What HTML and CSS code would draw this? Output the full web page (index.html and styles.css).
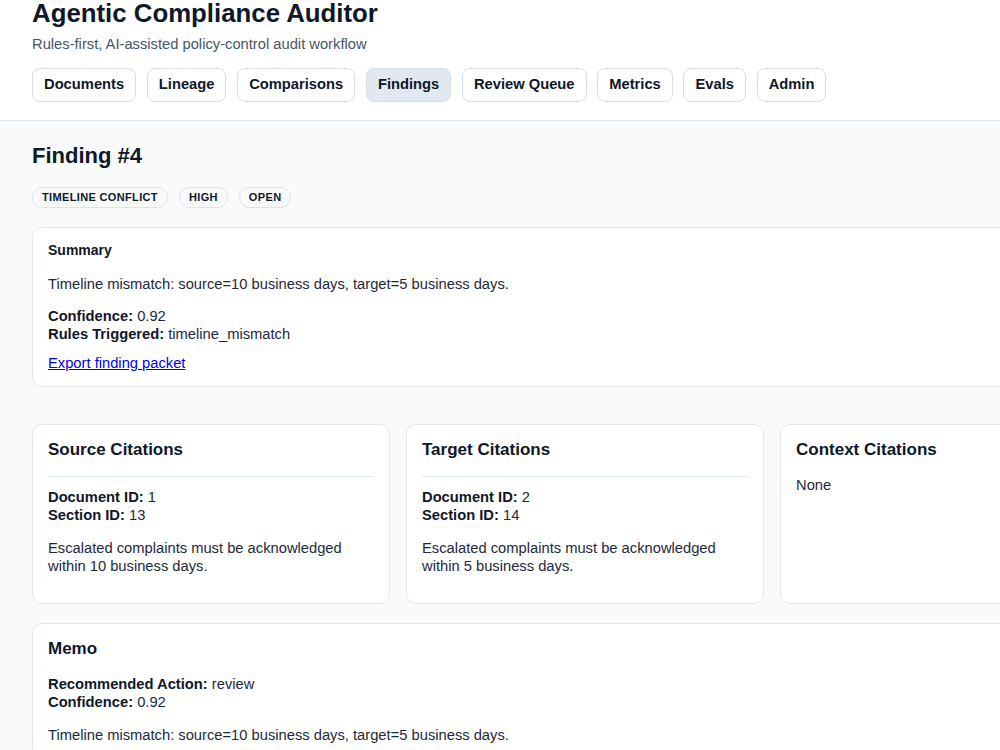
FILE: index.html
```html
<!DOCTYPE html>
<html lang="en">
<head>
<meta charset="utf-8">
<title>Agentic Compliance Auditor</title>
<link rel="stylesheet" href="styles.css">
</head>
<body>
<header class="topbar">
  <h1 class="app-title">Agentic Compliance Auditor</h1>
  <p class="subtitle">Rules-first, AI-assisted policy-control audit workflow</p>
  <nav class="nav">
    <a class="nav-btn">Documents</a>
    <a class="nav-btn">Lineage</a>
    <a class="nav-btn">Comparisons</a>
    <a class="nav-btn active">Findings</a>
    <a class="nav-btn">Review Queue</a>
    <a class="nav-btn">Metrics</a>
    <a class="nav-btn">Evals</a>
    <a class="nav-btn">Admin</a>
  </nav>
</header>
<main class="main">
  <div class="content">
    <h2 class="page-title">Finding #4</h2>
    <div class="tags">
      <span class="tag">Timeline Conflict</span>
      <span class="tag">High</span>
      <span class="tag">Open</span>
    </div>
    <section class="card summary">
      <h4 class="card-label">Summary</h4>
      <p class="para lead">Timeline mismatch: source=10 business days, target=5 business days.</p>
      <p class="para meta"><b>Confidence:</b> 0.92<br><b>Rules Triggered:</b> timeline_mismatch</p>
      <div class="actions"><a class="link" href="#">Export finding packet</a></div>
    </section>
    <div class="grid">
      <section class="card cite">
        <h3 class="card-title">Source Citations</h3>
        <hr class="rule">
        <p class="para first"><b>Document ID:</b> 1<br><b>Section ID:</b> 13</p>
        <p class="para">Escalated complaints must be acknowledged within 10 business days.</p>
      </section>
      <section class="card cite">
        <h3 class="card-title">Target Citations</h3>
        <hr class="rule">
        <p class="para first"><b>Document ID:</b> 2<br><b>Section ID:</b> 14</p>
        <p class="para">Escalated complaints must be acknowledged within 5 business days.</p>
      </section>
      <section class="card cite">
        <h3 class="card-title">Context Citations</h3>
        <p class="para first">None</p>
      </section>
    </div>
    <section class="card memo">
      <h3 class="card-title">Memo</h3>
      <p class="para first"><b>Recommended Action:</b> review<br><b>Confidence:</b> 0.92</p>
      <p class="para">Timeline mismatch: source=10 business days, target=5 business days.</p>
    </section>
  </div>
</main>
</body>
</html>
```
FILE: styles.css
```css
* { box-sizing: border-box; }
html { font-size: 16px; }
html, body { margin: 0; padding: 0; }
body {
  font-family: "Liberation Sans", Arial, sans-serif;
  font-size: 14.72px;
  line-height: 1.2;
  color: #1e293b;
  background: #f8fafc;
  width: 1170px;
}
.topbar {
  background: #ffffff;
  padding: 0 32px 18px;
  border-bottom: 1px solid #e2e8f0;
}
.app-title {
  margin: 0;
  font-size: 25.8px;
  line-height: 26px;
  font-weight: 700;
  color: #0f172a;
}
.subtitle {
  margin: 9px 0 0;
  font-size: 14.72px;
  line-height: 18px;
  color: #475569;
}
.nav {
  display: flex;
  gap: 10.7px;
  margin-top: 15px;
}
.nav-btn {
  display: inline-flex;
  align-items: center;
  height: 34px;
  padding: 0 11px;
  border: 1px solid #d6dee8;
  border-radius: 8px;
  background: #ffffff;
  font-size: 14.72px;
  font-weight: 700;
  color: #0f172a;
}
.nav-btn.active { background: #e2e8f0; }
.main { padding: 22px 32px 40px; }
.content { width: 1106px; }
.page-title {
  margin: 0;
  font-size: 22px;
  line-height: 26px;
  font-weight: 700;
  color: #0f172a;
}
.tags {
  display: flex;
  gap: 11px;
  margin-top: 18px;
}
.tag {
  display: inline-flex;
  align-items: center;
  height: 21px;
  padding: 0 9px;
  border: 1px solid #dbe3ee;
  border-radius: 999px;
  background: #f8fafc;
  font-size: 11px;
  font-weight: 700;
  letter-spacing: 0.35px;
  text-transform: uppercase;
  color: #0f172a;
}
.card {
  background: #ffffff;
  border: 1px solid #e2e8f0;
  border-radius: 10px;
  padding: 14px 15px;
}
.summary { margin-top: 19px; }
.card-label {
  margin: 0;
  font-size: 14px;
  line-height: 1.2;
  font-weight: 700;
  color: #0f172a;
}
.para {
  margin: 14.72px 0 0;
  line-height: 18px;
  color: #1e293b;
}
.para.lead { margin-top: 16px; }
.para.meta { margin-top: 14px; }
.para b { color: #0f172a; }
.actions { margin-top: 11px; line-height: 18px; }
.link {
  color: #0000ee;
  text-decoration: underline;
}
.grid {
  display: grid;
  grid-template-columns: repeat(3, 1fr);
  gap: 16px;
  margin-top: 37px;
}
.cite { min-height: 180px; padding-top: 15px; }
.card-title {
  margin: 0;
  font-size: 17px;
  line-height: 1.2;
  font-weight: 700;
  color: #0f172a;
}
.rule {
  border: 0;
  border-top: 1px solid #e2e8f0;
  margin: 16px 0 0;
}
.para.first { margin-top: 16px; }
.rule + .para.first { margin-top: 11px; }
.memo { margin-top: 19px; padding-top: 15px; }
.memo .para.first { margin-top: 16px; }
```
